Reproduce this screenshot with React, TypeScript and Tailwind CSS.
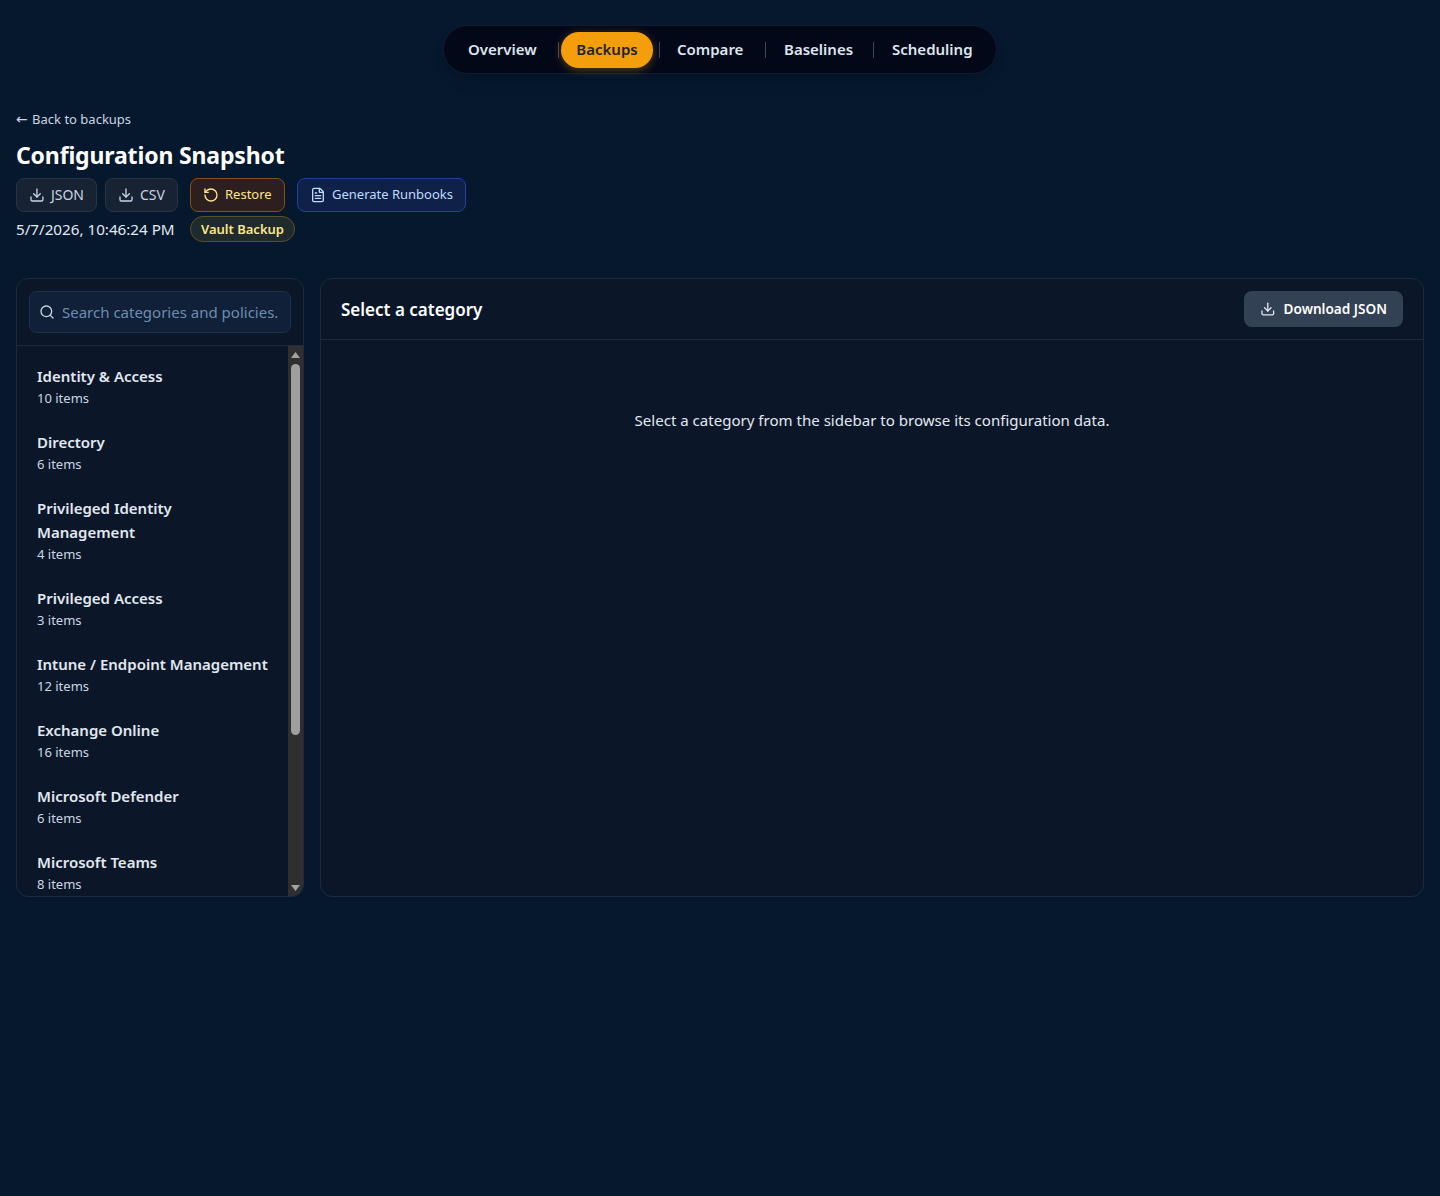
import React from 'react';
import { Download, FileText, RotateCcw, Search } from 'lucide-react';

const CATEGORIES = [
  { name: 'Identity & Access', count: 10 },
  { name: 'Directory', count: 6 },
  { name: 'Privileged Identity Management', count: 4 },
  { name: 'Privileged Access', count: 3 },
  { name: 'Intune / Endpoint Management', count: 12 },
  { name: 'Exchange Online', count: 16 },
  { name: 'Microsoft Defender', count: 6 },
  { name: 'Microsoft Teams', count: 8 },
];

function TopNav() {
  return (
    <div className="flex justify-center pt-[25px]">
      <nav className="flex h-[49px] w-[554px] items-center rounded-full border border-[#121c2e] bg-[#030819] pl-[8px] shadow-lg">
        <a className="ml-[16px] w-[90px] text-[15px] font-semibold text-[#dfe5ee]">Overview</a>
        <span className="h-4 w-px bg-[#3d4656]" />
        <a className="ml-[2px] flex h-9 w-[92px] items-center justify-center rounded-full bg-[#f59e0b] text-[15px] font-semibold text-[#1c2333] shadow-[0_2px_8px_rgba(245,158,11,0.35)]">
          Backups
        </a>
        <span className="ml-[6px] h-4 w-px bg-[#3d4656]" />
        <a className="ml-[17px] w-[88px] text-[15px] font-semibold text-[#dfe5ee]">Compare</a>
        <span className="h-4 w-px bg-[#3d4656]" />
        <a className="ml-[18px] w-[89px] text-[15px] font-semibold text-[#dfe5ee]">Baselines</a>
        <span className="h-4 w-px bg-[#3d4656]" />
        <a className="ml-[18px] text-[15px] font-semibold text-[#dfe5ee]">Scheduling</a>
      </nav>
    </div>
  );
}

function Header() {
  return (
    <div className="mt-[35px]">
      <a className="block text-[13px] leading-5 text-[#cbd5e1]">
        <span className="mr-[1px] font-['DejaVu_Sans'] text-[14px]">←</span> Back to backups
      </a>
      <h1 className="mt-[10px] text-[23px] leading-8 font-bold tracking-[-0.15px] text-white">Configuration Snapshot</h1>
      <div className="mt-[7px] flex items-center">
        <button className="flex h-[34px] w-[81px] items-center gap-1.5 rounded-lg border border-[#283444] bg-[#172232] px-3 text-sm text-[#cbd5e1]">
          <Download size={16} />
          JSON
        </button>
        <button className="ml-2 flex h-[34px] w-[73px] items-center gap-1.5 rounded-lg border border-[#283444] bg-[#172232] px-3 text-sm text-[#cbd5e1]">
          <Download size={16} />
          CSV
        </button>
        <button className="ml-3 flex h-[34px] w-[95px] items-center gap-1.5 rounded-lg border border-[#8a4f10] bg-[#2d1f20] px-3 text-[13px] text-[#fde68a]">
          <RotateCcw size={16} />
          Restore
        </button>
        <button className="ml-3 flex h-[34px] w-[169px] items-center gap-1.5 rounded-lg border border-[#1e429f] bg-[#0f2149] px-3 text-[13px] whitespace-nowrap text-[#bfdbfe]">
          <FileText size={16} />
          Generate Runbooks
        </button>
      </div>
      <div className="mt-[4px] flex h-[26px] items-center">
        <span className="w-[174px] text-[15.2px] text-[#e2e8f0]">5/7/2026, 10:46:24 PM</span>
        <span className="flex h-[26px] w-[105px] items-center justify-center rounded-full border border-[#5c4f24] bg-[#1f2a2d] pt-[1px] text-[13px] font-semibold text-[#fde68a]">
          Vault Backup
        </span>
      </div>
    </div>
  );
}

function Sidebar() {
  return (
    <aside className="flex h-[619px] w-[288px] shrink-0 flex-col overflow-hidden rounded-xl border border-[#1e293b] bg-[#0b1729]">
      <div className="border-b border-[#1e293b] p-3">
        <div className="flex h-[42px] items-center gap-[7px] rounded-lg border border-[#1e2f47] bg-[#0f2038] px-[9px]">
          <Search size={16} className="shrink-0 text-[#cbd5e1]" />
          <span className="text-[15px] whitespace-nowrap text-[#6d8db0]">Search categories and policies.</span>
        </div>
      </div>
      <div className="flex min-h-0 flex-1">
        <div className="flex min-w-0 flex-1 flex-col gap-[2px] overflow-hidden p-2">
          {CATEGORIES.map((c) => (
            <div key={c.name} className="rounded-lg px-3 py-[10px]">
              <div className="text-[15px] leading-6 font-semibold text-[#e2e8f0]">{c.name}</div>
              <div className="text-[13px] leading-5 text-[#cbd5e1]">{c.count} items</div>
            </div>
          ))}
        </div>
        {/* scrollbar as the browser drew it */}
        <div className="flex w-[15px] shrink-0 flex-col items-center bg-[#2f2f2f]">
          <svg width="9" height="6" viewBox="0 0 9 6" className="mt-[6px] shrink-0 fill-[#a3a3a3]">
            <path d="M4.5 0 9 6H0z" />
          </svg>
          <div className="mt-[6px] h-[371px] w-[9px] rounded-full bg-[#9f9f9f]" />
          <svg width="9" height="6" viewBox="0 0 9 6" className="mt-auto mb-[5px] shrink-0 fill-[#a3a3a3]">
            <path d="M0 0h9L4.5 6z" />
          </svg>
        </div>
      </div>
    </aside>
  );
}

function DetailPanel() {
  return (
    <section className="h-[619px] min-w-0 flex-1 rounded-xl border border-[#1e293b] bg-[#0b1729]">
      <div className="flex h-[61px] items-center justify-between border-b border-[#1e293b] pr-5 pl-5">
        <h2 className="pt-[2px] text-[17px] font-semibold text-white">Select a category</h2>
        <button className="flex h-9 w-[159px] items-center gap-2 rounded-lg bg-[#334155] px-4 text-[13.6px] font-semibold whitespace-nowrap text-white">
          <Download size={16} className="text-[#e2e8f0]" />
          Download JSON
        </button>
      </div>
      <p className="pt-[68px] text-center text-[15.05px] leading-6 text-[#e2e8f0]">
        Select a category from the sidebar to browse its configuration data.
      </p>
    </section>
  );
}

export default function App() {
  return (
    <div className="min-h-[1196px] bg-[#06182e] px-4 font-['Noto_Sans','Open_Sans',sans-serif]">
      <TopNav />
      <Header />
      <div className="mt-[36px] flex gap-4">
        <Sidebar />
        <DetailPanel />
      </div>
    </div>
  );
}
